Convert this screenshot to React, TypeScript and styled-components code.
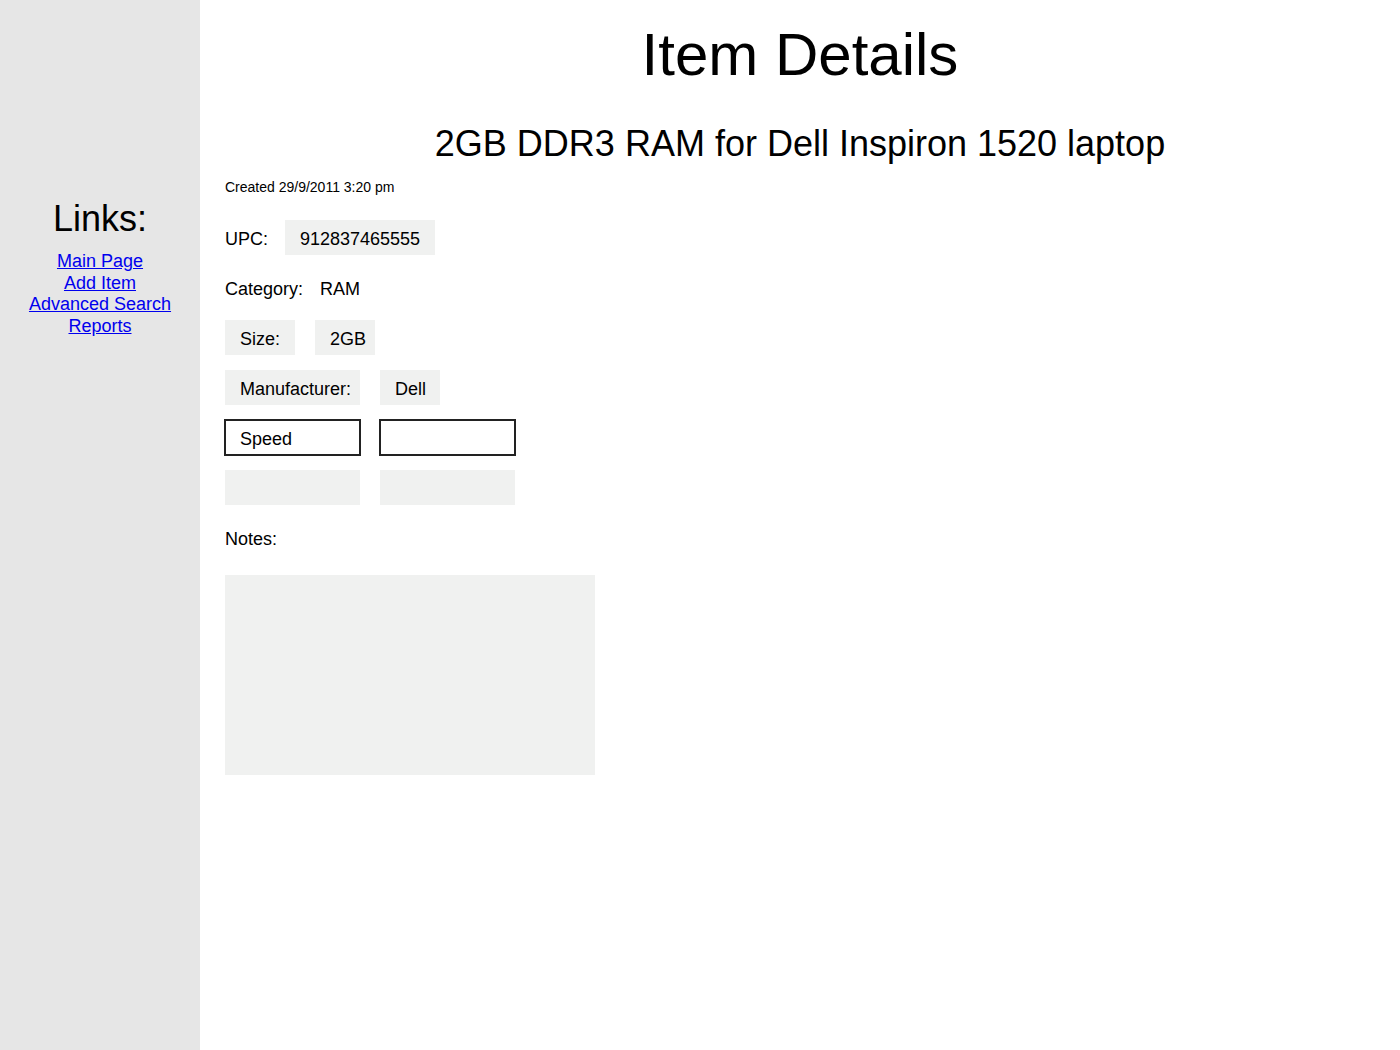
import styled, { createGlobalStyle } from 'styled-components';

const GlobalStyle = createGlobalStyle`
  html, body {
    margin: 0;
    padding: 0;
    background: #ffffff;
  }
  body {
    font-family: "Liberation Sans", Arial, sans-serif;
    color: #000;
  }
`;

const Page = styled.div`
  display: flex;
  min-height: 1050px;
`;

const Sidebar = styled.nav`
  width: 200px;
  flex-shrink: 0;
  background: #e6e6e6;
  padding-top: 198px;
  box-sizing: border-box;
  text-align: center;
`;

const SidebarTitle = styled.h2`
  margin: 0;
  font-size: 36px;
  line-height: 41px;
  font-weight: normal;
`;

const LinkList = styled.div`
  margin-top: 12px;
  display: flex;
  flex-direction: column;
  align-items: center;
  font-size: 18px;
  line-height: 21.5px;
`;

const NavLink = styled.a`
  color: #0000ee;
  text-decoration: underline;
`;

const Main = styled.main`
  flex: 1;
  padding: 20px 25px;
`;

const Title = styled.h1`
  margin: 0;
  font-size: 60px;
  line-height: 69px;
  font-weight: normal;
  text-align: center;
`;

const Subtitle = styled.h2`
  margin: 34px 0 0;
  font-size: 36px;
  line-height: 41px;
  font-weight: normal;
  text-align: center;
`;

const Created = styled.p`
  margin: 15px 0 0;
  font-size: 14px;
  line-height: 16px;
`;

const Fields = styled.div`
  margin-top: 25px;
  display: flex;
  flex-direction: column;
  gap: 15px;
`;

const Row = styled.div`
  display: flex;
  gap: 20px;
  height: 35px;
`;

const Cell = styled.div<{ $w?: number; $boxed?: boolean; $outlined?: boolean }>`
  box-sizing: border-box;
  height: 35px;
  font-size: 18px;
  line-height: 35px;
  padding-top: 2px;
  white-space: nowrap;
  width: ${p => (p.$w ? `${p.$w}px` : 'auto')};
  padding-left: ${p => (p.$boxed || p.$outlined ? '15px' : '0')};
  padding-right: ${p => (p.$boxed || p.$outlined ? '15px' : '0')};
  background: ${p => (p.$boxed ? '#f0f1f0' : 'transparent')};
  outline: ${p => (p.$outlined ? '2px solid #222222' : 'none')};
  outline-offset: -1px;
`;

const NotesBox = styled.div`
  margin-top: 5px;
  width: 370px;
  height: 200px;
  background: #f0f1f0;
`;

export default function App() {
  return (
    <>
      <GlobalStyle />
      <Page>
        <Sidebar>
          <SidebarTitle>Links:</SidebarTitle>
          <LinkList>
            <NavLink href="#">Main Page</NavLink>
            <NavLink href="#">Add Item</NavLink>
            <NavLink href="#">Advanced Search</NavLink>
            <NavLink href="#">Reports</NavLink>
          </LinkList>
        </Sidebar>
        <Main>
          <Title>Item Details</Title>
          <Subtitle>2GB DDR3 RAM for Dell Inspiron 1520 laptop</Subtitle>
          <Created>Created 29/9/2011 3:20 pm</Created>
          <Fields>
            <Row>
              <Cell $w={40}>UPC:</Cell>
              <Cell $boxed>912837465555</Cell>
            </Row>
            <Row>
              <Cell $w={75}>Category:</Cell>
              <Cell>RAM</Cell>
            </Row>
            <Row>
              <Cell $boxed>Size:</Cell>
              <Cell $boxed $w={60}>2GB</Cell>
            </Row>
            <Row>
              <Cell $boxed $w={135}>Manufacturer:</Cell>
              <Cell $boxed $w={60}>Dell</Cell>
            </Row>
            <Row>
              <Cell $outlined $w={135}>Speed</Cell>
              <Cell $outlined $w={135}></Cell>
            </Row>
            <Row>
              <Cell $boxed $w={135}></Cell>
              <Cell $boxed $w={135}></Cell>
            </Row>
            <Row>
              <Cell>Notes:</Cell>
            </Row>
            <NotesBox />
          </Fields>
        </Main>
      </Page>
    </>
  );
}
